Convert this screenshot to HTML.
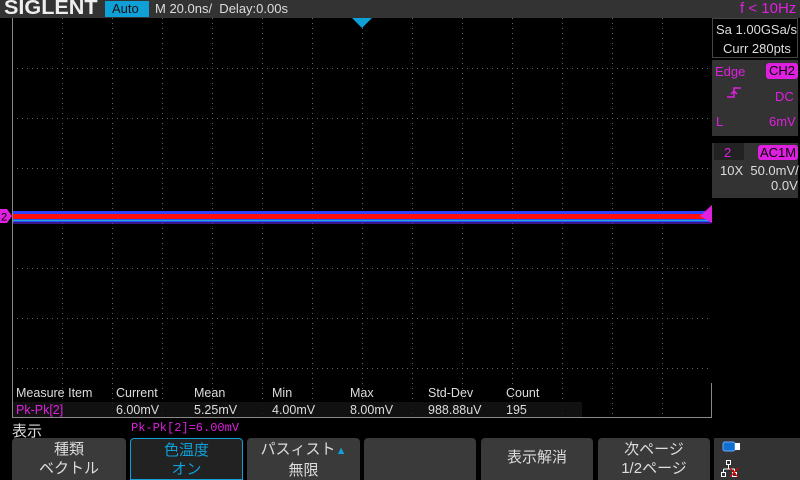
<!DOCTYPE html><html><head><meta charset="utf-8"><style>
*{margin:0;padding:0;box-sizing:border-box}
body{width:800px;height:480px;background:#000;position:relative;overflow:hidden;font-family:"Liberation Sans","Noto Sans CJK JP",sans-serif;color:#ddd}
.a{position:absolute}
.t{font-size:13px;white-space:nowrap}
.btn{position:absolute;top:438px;height:42px;background:#3a3a3a;border-radius:4px 4px 0 0;text-align:center;font-size:15px;line-height:19px;color:#ddd;padding-top:2px}
.m{color:#e020e0}
</style></head><body>
<div class="a" style="left:0;top:0;width:800px;height:18px;background:#333"></div>
<div class="a" style="left:4px;top:-3px;font:bold 20px 'Liberation Sans',sans-serif;color:#eee;transform:scaleX(1.08);transform-origin:left top">SIGLENT</div>
<div class="a t" style="left:105px;top:1px;width:44px;height:16px;background:#10a0d8;color:#111;padding-left:7px;line-height:16px">Auto</div>
<div class="a t" style="left:155px;top:1px;line-height:16px;color:#ddd">M 20.0ns/&nbsp; Delay:0.00s</div>
<div class="a t" style="left:740px;top:0px;line-height:18px;font-size:15px;color:#e020e0">f &lt; 10Hz</div>
<svg class="a" style="left:0;top:18px" width="712" height="400">
<g stroke="#666" stroke-width="1" stroke-dasharray="1,4">
<line x1="62.5" y1="0" x2="62.5" y2="400"/><line x1="112.5" y1="0" x2="112.5" y2="400"/><line x1="162.5" y1="0" x2="162.5" y2="400"/><line x1="212.5" y1="0" x2="212.5" y2="400"/><line x1="262.5" y1="0" x2="262.5" y2="400"/><line x1="312.5" y1="0" x2="312.5" y2="400"/><line x1="412.5" y1="0" x2="412.5" y2="400"/><line x1="462.5" y1="0" x2="462.5" y2="400"/><line x1="512.5" y1="0" x2="512.5" y2="400"/><line x1="562.5" y1="0" x2="562.5" y2="400"/><line x1="612.5" y1="0" x2="612.5" y2="400"/><line x1="662.5" y1="0" x2="662.5" y2="400"/><line x1="362.5" y1="0" x2="362.5" y2="400"/>
<line x1="12" y1="50.5" x2="712" y2="50.5"/><line x1="12" y1="100.5" x2="712" y2="100.5"/><line x1="12" y1="150.5" x2="712" y2="150.5"/><line x1="12" y1="250.5" x2="712" y2="250.5"/><line x1="12" y1="300.5" x2="712" y2="300.5"/><line x1="12" y1="350.5" x2="712" y2="350.5"/><line x1="12" y1="200.5" x2="712" y2="200.5"/>
</g>
<line x1="12.5" y1="0" x2="12.5" y2="400" stroke="#888"/>
<line x1="711.5" y1="365" x2="711.5" y2="400" stroke="#888"/>
<line x1="12" y1="399.5" x2="712" y2="399.5" stroke="#888"/>
<rect x="13" y="193" width="698" height="3" fill="#3040ff"/>
<rect x="13" y="196" width="698" height="5" fill="#ff1010"/>
<rect x="13" y="201" width="698" height="3" fill="#2050ff"/>
<rect x="13" y="202" width="698" height="1" fill="#30d0c0" opacity=".7"/>
<rect x="13" y="204" width="698" height="2" fill="#6020e0" opacity=".6"/>
<polygon points="352,0 372,0 362,10" fill="#10a0d8"/>
<polygon points="712,187 712,205 700,198" fill="#e020e0"/>
</svg>
<svg class="a" style="left:0;top:208px" width="13" height="16"><polygon points="0,1 7,1 12,8 7,15 0,15" fill="#e020e0"/><text x="1" y="12.5" font-size="11" font-family="Liberation Sans" fill="#000">2</text></svg>
<div class="a" style="left:712px;top:18px;width:88px;height:462px;background:#000"></div>
<div class="a" style="left:712px;top:18px;width:86px;height:40px;border:1px solid #444"></div>
<div class="a t" style="left:716px;top:22px">Sa 1.00GSa/s</div>
<div class="a t" style="left:723px;top:41px">Curr 280pts</div>
<div class="a" style="left:712px;top:60px;width:86px;height:76px;background:#333"></div>
<div class="a t m" style="left:715px;top:64px">Edge</div>
<div class="a t" style="left:766px;top:63px;width:32px;height:16px;background:#e020e0;color:#000;border-radius:3px;text-align:center;line-height:16px">CH2</div>
<div class="a t m" style="left:775px;top:89px">DC</div>
<svg class="a" style="left:726px;top:85px" width="16" height="16"><path d="M1 12H8V3H15M5 9L8 6L11 9" stroke="#e020e0" stroke-width="1.5" fill="none"/></svg>
<div class="a t m" style="left:716px;top:114px">L</div>
<div class="a t m" style="left:769px;top:114px">6mV</div>
<div class="a" style="left:712px;top:143px;width:86px;height:55px;background:#333"></div>
<div class="a" style="left:714px;top:143px;width:30px;height:17px;background:#222"></div>
<div class="a t m" style="left:724px;top:145px">2</div>
<div class="a t" style="left:758px;top:145px;width:40px;height:15px;background:#e020e0;color:#000;border-radius:3px;text-align:center;line-height:15px">AC1M</div>
<div class="a t" style="left:720px;top:163px">10X&nbsp; 50.0mV/</div>
<div class="a t" style="left:771px;top:178px">0.0V</div>
<div class="a" style="left:13px;top:402px;width:569px;height:15px;background:#141414;opacity:.85"></div>
<div class="a t" style="left:16px;top:386px;font-size:12.5px">Measure Item</div>
<div class="a t" style="left:116px;top:386px;font-size:12.5px">Current</div>
<div class="a t" style="left:194px;top:386px;font-size:12.5px">Mean</div>
<div class="a t" style="left:272px;top:386px;font-size:12.5px">Min</div>
<div class="a t" style="left:350px;top:386px;font-size:12.5px">Max</div>
<div class="a t" style="left:428px;top:386px;font-size:12.5px">Std-Dev</div>
<div class="a t" style="left:506px;top:386px;font-size:12.5px">Count</div>
<div class="a t m" style="left:16px;top:403px;font-size:12.5px">Pk-Pk[2]</div>
<div class="a t" style="left:116px;top:403px;font-size:12.5px">6.00mV</div>
<div class="a t" style="left:194px;top:403px;font-size:12.5px">5.25mV</div>
<div class="a t" style="left:272px;top:403px;font-size:12.5px">4.00mV</div>
<div class="a t" style="left:350px;top:403px;font-size:12.5px">8.00mV</div>
<div class="a t" style="left:428px;top:403px;font-size:12.5px">988.88uV</div>
<div class="a t" style="left:506px;top:403px;font-size:12.5px">195</div>
<div class="a" style="left:12px;top:420px;font-size:15px;color:#ddd">表示</div>
<div class="a" style="left:131px;top:421px;font:12px 'Liberation Mono',monospace;color:#e020e0">Pk-Pk[2]=6.00mV</div>
<div class="btn" style="left:12px;width:114px">種類<br>ベクトル</div>
<div class="btn" style="left:130px;width:113px;border:1px solid #10a0d8;background:#222;color:#10a0d8">色温度<br>オン</div>
<div class="btn" style="left:247px;width:113px">パスィスト<span style="color:#10a0d8;font-size:11px">▲</span><br>無限</div>
<div class="btn" style="left:364px;width:112px"></div>
<div class="btn" style="left:481px;width:112px;line-height:40px;padding:0">表示解消</div>
<div class="btn" style="left:598px;width:112px">次ページ<br>1/2ページ</div>
<div class="a" style="left:714px;top:438px;width:86px;height:42px;background:#333"></div>
<svg class="a" style="left:720px;top:440px" width="30" height="38"><rect x="3" y="2" width="12" height="9" rx="2" fill="#1070d0" stroke="#6af"/><rect x="15" y="3" width="5" height="7" fill="#fff"/><g stroke="#fff" fill="none"><rect x="6.5" y="20.5" width="4" height="4"/><rect x="1.5" y="32.5" width="4" height="4"/><rect x="12.5" y="32.5" width="4" height="4"/><path d="M8.5 25V29M3.5 29H14.5M3.5 29V32M14.5 29V32"/></g><path d="M10 28L18 37M18 28L10 37" stroke="#e00" stroke-width="1.2"/></svg>
</body></html>
